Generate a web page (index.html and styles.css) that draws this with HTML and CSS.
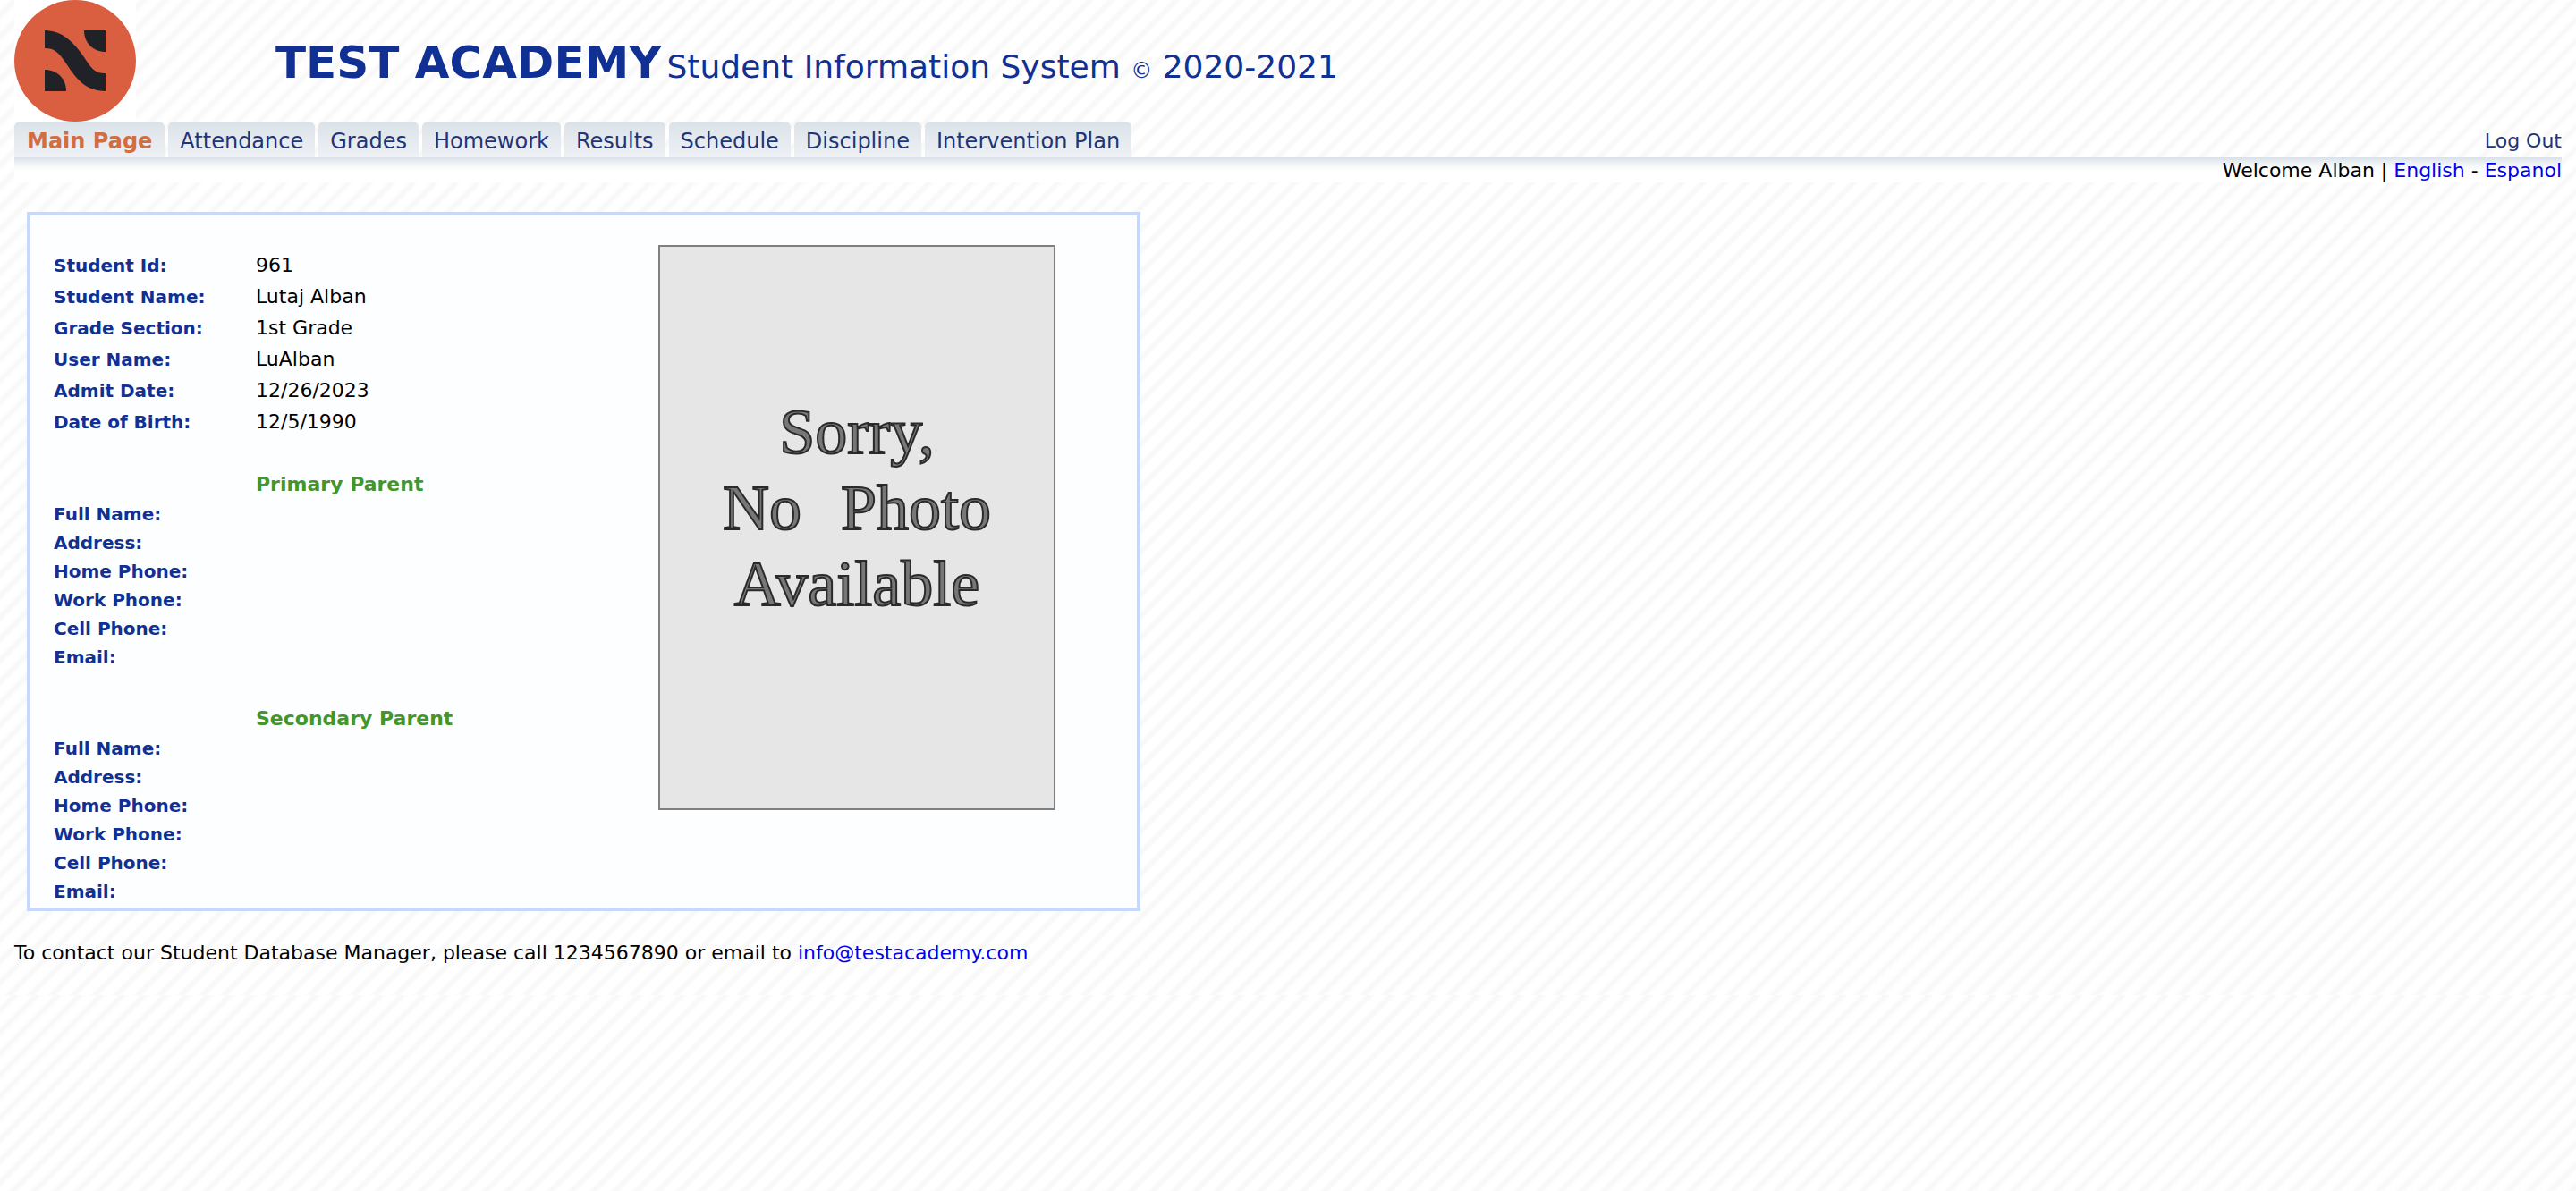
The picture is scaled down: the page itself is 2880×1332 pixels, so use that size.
FILE: index.html
```html
<!DOCTYPE html>
<html lang="en">
<head>
<meta charset="utf-8">
<title>Test Academy - Student Information System</title>
<meta name="viewport" content="width=device-width, initial-scale=1">
<link rel="stylesheet" href="styles.css">
</head>
<body>
<header class="masthead">
  <a class="logo" href="#" aria-label="Test Academy home">
    <svg viewBox="0 0 136 136" aria-hidden="true">
      <rect width="136" height="136" fill="#fff"/>
      <circle cx="68" cy="68" r="68" fill="#da5f40"/>
      <g fill="#212228">
        <path d="M34 34C54 34 67 48 78 64C87 78 91 82 102 82V102C80 102 69 88 58 71C49 58 45 54 34 54Z"/>
        <path d="M78 34H102V58C88 58 78 48 78 34Z"/>
        <path d="M34 78C48 78 58 88 58 102H34Z"/>
      </g>
    </svg>
  </a>
  <h1 class="title"><strong class="school">TEST ACADEMY</strong><span>Student Information System <small class="mark">©</small> 2020-2021</span></h1>
</header>
<nav class="menu">
  <ul class="tabs">
    <li><a class="tab current" href="#">Main Page</a></li>
    <li><a class="tab" href="#">Attendance</a></li>
    <li><a class="tab" href="#">Grades</a></li>
    <li><a class="tab" href="#">Homework</a></li>
    <li><a class="tab" href="#">Results</a></li>
    <li><a class="tab" href="#">Schedule</a></li>
    <li><a class="tab" href="#">Discipline</a></li>
    <li><a class="tab" href="#">Intervention Plan</a></li>
  </ul>
  <a class="logout" href="#">Log Out</a>
</nav>
<div class="welcome">Welcome Alban | <a href="#">English</a> - <a href="#">Espanol</a></div>
<main class="card">
  <table class="details">
    <tbody class="student">
      <tr><th scope="row">Student Id:</th><td>961</td></tr>
      <tr><th scope="row">Student Name:</th><td>Lutaj Alban</td></tr>
      <tr><th scope="row">Grade Section:</th><td>1st Grade</td></tr>
      <tr><th scope="row">User Name:</th><td>LuAlban</td></tr>
      <tr><th scope="row">Admit Date:</th><td>12/26/2023</td></tr>
      <tr><th scope="row">Date of Birth:</th><td>12/5/1990</td></tr>
    </tbody>
    <tbody class="parent">
      <tr class="heading"><td></td><th scope="colgroup">Primary Parent</th></tr>
      <tr><th scope="row">Full Name:</th><td></td></tr>
      <tr><th scope="row">Address:</th><td></td></tr>
      <tr><th scope="row">Home Phone:</th><td></td></tr>
      <tr><th scope="row">Work Phone:</th><td></td></tr>
      <tr><th scope="row">Cell Phone:</th><td></td></tr>
      <tr><th scope="row">Email:</th><td></td></tr>
    </tbody>
    <tbody class="parent">
      <tr class="heading"><td></td><th scope="colgroup">Secondary Parent</th></tr>
      <tr><th scope="row">Full Name:</th><td></td></tr>
      <tr><th scope="row">Address:</th><td></td></tr>
      <tr><th scope="row">Home Phone:</th><td></td></tr>
      <tr><th scope="row">Work Phone:</th><td></td></tr>
      <tr><th scope="row">Cell Phone:</th><td></td></tr>
      <tr><th scope="row">Email:</th><td></td></tr>
    </tbody>
  </table>
  <div class="photo"><p>Sorry,<br><span class="word">No</span> Photo<br>Available</p></div>
</main>
<footer class="contact">To contact our Student Database Manager, please call 1234567890 or email to <a href="mailto:info@testacademy.com">info@testacademy.com</a></footer>
</body>
</html>
```
FILE: styles.css
```css
* { box-sizing: border-box; }

body {
  margin: 0;
  padding: 0 16px;
  background: #fff repeating-linear-gradient(135deg, #fff 0 7px, #f8f8f8 11px 13px, #fff 17px);
  color: #000;
  font: 22px/28px Verdana, "DejaVu Sans", sans-serif;
}

a { color: #00e; text-decoration: none; }

.masthead { display: flex; gap: 156px; }
.logo { flex: none; width: 136px; height: 136px; }
.logo svg { display: block; }

.title {
  display: flex;
  align-items: baseline;
  gap: 6px;
  margin: 0;
  padding-top: 40px;
  color: #113093;
  font-size: 36px;
  font-weight: normal;
  line-height: 60px;
}
.school { font-size: 50px; }
.mark { font-size: 24px; }

.menu { display: flex; justify-content: space-between; }
.tabs { display: flex; gap: 4px; margin: 0; padding: 0; list-style: none; }
.tab {
  display: block;
  padding: 0 13px;
  border-radius: 6px 6px 0 0;
  background: linear-gradient(#dae2e9, #e5eaee 50%, #eef1f6);
  color: #1f3578;
  font-size: 24px;
  line-height: 44px;
  height: 40px;
}
.current { padding: 0 14px; color: #d26d3f; font-weight: bold; }
.logout { height: 40px; color: #1f3578; line-height: 44px; }

.welcome {
  height: 28px;
  background: linear-gradient(#d9e0e8, #f3f6f8 8px, #fff 16px);
  line-height: 30px;
  text-align: right;
}

.card {
  display: flex;
  justify-content: space-between;
  width: 1245px;
  max-width: 100%;
  margin: 33px 14px 0;
  padding: 33px 91px 0 26px;
  border: 4px solid #c6d8fd;
  background: #fdfeff;
}

.details { margin: 5px 0 2px; border-collapse: collapse; }
.details th, .details td { padding: 0; text-align: left; }
.details th { color: #113093; font-size: 20px; }
.details tr > :first-child { width: 226px; }
.student tr { height: 35px; }
.parent tr { height: 32px; }
.details .heading { height: 70px; vertical-align: bottom; }
.details .heading th { padding-bottom: 3px; color: #43962b; font-size: 22px; }

.photo {
  display: grid;
  place-items: center;
  width: 444px;
  height: 632px;
  border: 2px solid #808080;
  background: #e6e6e6;
}
.photo p {
  margin: 0;
  padding-bottom: 44px;
  color: #777;
  font: 72px/85px "Liberation Serif", serif;
  text-align: center;
  -webkit-text-stroke: 2px #2a2a2a;
}
.word { margin-right: 26px; }

.contact { padding: 33px 0; }
```
